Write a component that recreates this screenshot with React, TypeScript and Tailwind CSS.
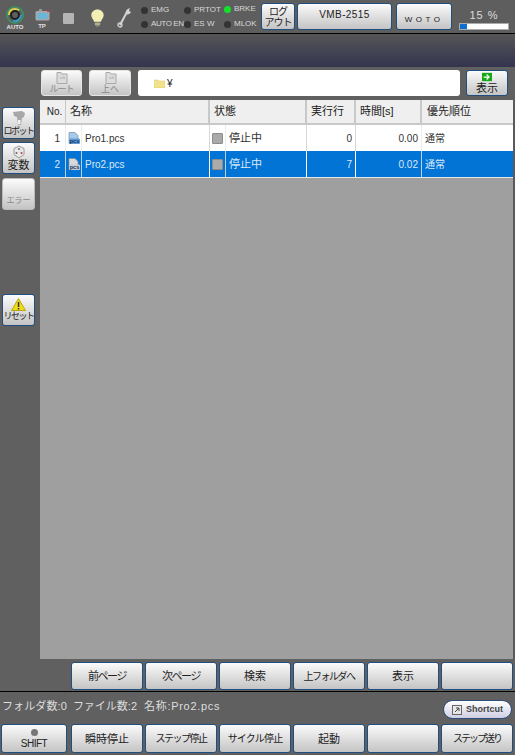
import type { ReactNode } from "react";
import { twMerge } from "tailwind-merge";

const FONT = "font-['Liberation_Sans','Noto_Sans_CJK_JP',sans-serif]";

function Btn({ children, className = "" }: { children?: ReactNode; className?: string }) {
  return (
    <div
      className={twMerge(
        "flex shrink-0 flex-col items-center justify-center whitespace-nowrap rounded-[3px] border border-[#1f4f7f] bg-gradient-to-b from-[#fbfbfb] to-[#c4c4c4] text-[11px] leading-[12px] text-[#222]",
        className,
      )}
    >
      {children}
    </div>
  );
}

function Lamp({ label, on, className = "" }: { label: string; on?: boolean; className?: string }) {
  return (
    <div className={`flex items-center gap-[3px] whitespace-nowrap text-[8px] leading-none text-[#d8d8d8] ${className}`}>
      <span className={`size-[7px] shrink-0 rounded-full ${on ? "bg-[#14e02a]" : "bg-[#333]"}`} />
      <span>{label}</span>
    </div>
  );
}

function PcsIcon({ selected }: { selected?: boolean }) {
  return (
    <svg width="12" height="13" viewBox="0 0 12 13">
      <path d="M1 0.500h6l3 3v8H1z" fill={selected ? "#d9d9d9" : "#a9c9ea"} stroke={selected ? "#8f8f8f" : "#5a7fa8"} strokeWidth="0.600" />
      <rect x="1" y="6.500" width="11" height="5.500" rx="1" fill={selected ? "#c4ccd6" : "#5f9ad6"} />
      <text x="6.500" y="11" textAnchor="middle" fontSize="5.500" fontWeight="bold" fill="#12335a" fontFamily="Liberation Sans">pcs</text>
    </svg>
  );
}

const COLS = "grid grid-cols-[26px_16px_128px_16px_81px_49px_66px_91px]";

function Row({ no, name, line, time, selected }: { no: string; name: string; line: string; time: string; selected?: boolean }) {
  const soft = selected ? "border-r border-[#b8cfe8]" : "border-r border-[#ececec]";
  const hard = selected ? "border-r border-white" : "border-r border-[#d8d8d8]";
  return (
    <div className={`${COLS} h-[26px] items-stretch text-[10px] ${selected ? "bg-[#0274d6] text-[#dbe9f6]" : "bg-white text-[#333]"}`}>
      <div className={`${soft} flex items-center justify-end pr-[5px]`}>{no}</div>
      <div className={`${soft} flex items-center justify-center`}><PcsIcon selected={selected} /></div>
      <div className={`${hard} flex items-center pl-[3px]`}>{name}</div>
      <div className={`${soft} flex items-center justify-center`}>
        <span className="size-[11px] rounded-[1px] border border-[#8c8c8c] bg-[#aaa]" />
      </div>
      <div className={`${hard} flex items-center pl-[3px] text-[11px]`}>停止中</div>
      <div className={`${hard} flex items-center justify-end pr-[3px]`}>{line}</div>
      <div className={`${soft} flex items-center justify-end pr-[3px]`}>{time}</div>
      <div className="flex items-center pl-[3px]">通常</div>
    </div>
  );
}

function Head({ children, className = "" }: { children: ReactNode; className?: string }) {
  return <div className={`flex items-center border-r-2 border-[#c8c8c8] pl-[4px] ${className}`}>{children}</div>;
}

function PageIcon() {
  return (
    <svg width="15" height="12" viewBox="0 0 15 12">
      <path d="M3 0.500h4l1 1.500h5v9.500H3z" fill="#dcdcdc" stroke="#a8a8a8" />
      <path d="M6 6h5l-1.500-1.500" stroke="#b0b0b0" fill="none" />
    </svg>
  );
}

export default function App() {
  return (
    <div className={`flex h-[755px] w-[515px] flex-col overflow-hidden bg-[#606060] ${FONT}`}>
      {/* status bar */}
      <div className="flex h-[34px] shrink-0 items-start border-b border-black bg-[#5e5e5e]">
        <div className="ml-[6px] mt-[6px] flex w-[18px] shrink-0 flex-col items-center">
          <svg width="18" height="18" viewBox="0 0 18 18" fill="none">
            <circle cx="9" cy="9" r="8" stroke="#3f8f62" strokeWidth="2" />
            <path d="M3 9a6 6 0 0 1 10-4.500" stroke="#e0d050" strokeWidth="2" />
            <circle cx="9" cy="9" r="4" stroke="#1e1e1e" strokeWidth="2" />
            <path d="M15 9a6 6 0 0 1-8 5.600" stroke="#3a96c8" strokeWidth="2" />
          </svg>
          <span className="text-[6px] font-bold leading-[7px] text-[#e8e8e8]">AUTO</span>
        </div>
        <div className="ml-[10px] mt-[9px] flex w-[16px] shrink-0 flex-col items-center">
          <svg width="15" height="12" viewBox="0 0 15 12">
            <rect x="0.500" y="2" width="14" height="9.500" rx="1.500" fill="#a8a8a8" />
            <rect x="2.500" y="4" width="10" height="6" fill="#68b6d8" />
            <rect x="4" y="0" width="3" height="2" fill="#999" />
            <rect x="12" y="1" width="2" height="2" fill="#c24040" />
          </svg>
          <span className="mt-[2px] text-[6px] font-bold leading-[6px] text-[#e0e0e0]">TP</span>
        </div>
        <span className="ml-[13px] mt-[13px] size-[11px] shrink-0 rounded-[1px] bg-[#b4b4b4]" />
        <svg className="ml-[16px] mt-[8px] shrink-0" width="15" height="20" viewBox="0 0 17 20">
          <path d="M8.500 0.500c4 0 7 2.800 7 6.400 0 3-2.400 4.600-3.200 7.400H4.700C3.900 11.500 1.500 9.900 1.500 6.900c0-3.600 3-6.400 7-6.400z" fill="#f3eeb4" />
          <rect x="5.500" y="15" width="6" height="3.500" rx="1" fill="#b4b088" />
          <rect x="7" y="18.500" width="3" height="1.500" fill="#888" />
        </svg>
        <svg className="ml-[12px] mt-[7px] shrink-0" width="14" height="21" viewBox="0 0 14 21" fill="none">
          <path d="M3 18L10 5" stroke="#d4d4d4" strokeWidth="2" />
          <path d="M9 7c-1-3 1-5 4-6l-1 3 2 1c-1 2-3 3-5 2z" fill="#d4d4d4" />
          <circle cx="3" cy="18" r="2" stroke="#d4d4d4" strokeWidth="1.300" />
        </svg>
        <div className="ml-[10px] mt-[6px] flex w-[43px] shrink-0 flex-col gap-[6px]">
          <Lamp label="EMG" />
          <Lamp label="AUTO EN" className="tracking-[-0.4px]" />
        </div>
        <div className="mt-[6px] flex w-[40px] shrink-0 flex-col gap-[6px]">
          <Lamp label="PRTOT" />
          <Lamp label="ES W" />
        </div>
        <div className="mt-[5px] flex w-[37px] shrink-0 flex-col gap-[7px]">
          <Lamp label="BRKE" on />
          <Lamp label="MLOK" />
        </div>
        <Btn className="mt-[3px] h-[27px] w-[34px] text-[10px] leading-[11px] tracking-[-1px]">
          <span>ログ</span>
          <span>アウト</span>
        </Btn>
        <Btn className="ml-[2px] mt-[3px] h-[27px] w-[95px] pb-[4px] text-[10px] tracking-[0.4px]">VMB-2515</Btn>
        <Btn className="ml-[4px] mt-[3px] h-[27px] w-[56px] justify-end pb-[4px] text-[8px] leading-[10px] tracking-[3.500px]">WOTO</Btn>
        <div className="ml-[7px] mt-[9px] flex w-[50px] shrink-0 flex-col items-center">
          <span className="text-[11px] leading-[12px] tracking-[1px] text-[#dcdcdc]">15 %</span>
          <div className="mt-[2px] h-[7px] w-[50px] border border-[#aaa] bg-white">
            <div className="h-full w-[15%] bg-[#0f6fd0]" />
          </div>
        </div>
      </div>

      {/* title band */}
      <div className="h-[33px] shrink-0 bg-gradient-to-b from-[#565656] to-[#34344f]" />

      {/* path bar */}
      <div className="flex h-[33px] shrink-0 items-start pl-[41px] pt-[3px]">
        <Btn className="h-[26px] w-[41px] border-[#e4e4e4] text-[9px] leading-[10px] tracking-[-1px] text-[#888]">
          <PageIcon />
          <span>ルート</span>
        </Btn>
        <Btn className="ml-[7px] h-[26px] w-[42px] border-[#e4e4e4] text-[9px] leading-[10px] text-[#888]">
          <PageIcon />
          <span>上へ</span>
        </Btn>
        <div className="ml-[7px] flex h-[26px] w-[322px] shrink-0 items-center rounded-[3px] bg-white pl-[16px] text-[10px] text-[#222]">
          <svg width="11" height="9" viewBox="0 0 11 9">
            <path d="M0 1h4l1 1h6v7H0z" fill="#f2e28c" stroke="#d6c468" strokeWidth="0.500" />
          </svg>
          <span className="ml-[2px]">¥</span>
        </div>
        <Btn className="ml-[6px] h-[26px] w-[42px] text-[11px] leading-[12px]">
          <svg width="10" height="10" viewBox="0 0 12 10">
            <rect width="12" height="10" fill="#16a816" />
            <path d="M2 5h6M5.500 2l3 3-3 3" stroke="#fff" strokeWidth="1.500" fill="none" />
          </svg>
          <span>表示</span>
        </Btn>
      </div>

      {/* main */}
      <div className="flex min-h-0 flex-1">
        <div className="flex w-[40px] shrink-0 flex-col pl-[2px] pt-[7px]">
          <Btn className="h-[32px] w-[33px] text-[9px] leading-[10px] tracking-[-1.5px]">
            <svg width="12" height="15" viewBox="0 0 12 15">
              <path d="M0 1l9-1 3 2-1 4-2 1-1 7H5L4 6 1 5z" fill="#a8a8a8" />
              <rect x="5" y="9" width="2.500" height="4" fill="#f0f0f0" />
            </svg>
            <span>ロボット</span>
          </Btn>
          <Btn className="mt-[3px] h-[32px] w-[33px] text-[11px] leading-[12px]">
            <svg width="14" height="14" viewBox="0 0 14 14">
              <path d="M7 1l5 2.500v6L7 13l-5-3.500v-6z" fill="#e8e8e8" stroke="#9a9a9a" />
              <circle cx="7" cy="4" r="1" fill="#666" />
              <circle cx="4.500" cy="8" r="1" fill="#666" />
              <circle cx="9.500" cy="8" r="1" fill="#b04040" />
            </svg>
            <span>変数</span>
          </Btn>
          <Btn className="mt-[4px] h-[32px] w-[33px] justify-end border-[#bbb] pb-[3px] text-[8px] leading-[10px] text-[#888]">エラー</Btn>
          <Btn className="mt-[84px] h-[32px] w-[33px] text-[9px] leading-[11px] tracking-[-1.5px]">
            <svg width="15" height="13" viewBox="0 0 15 13">
              <path d="M7.500 0.500L14.500 12.500H0.500z" fill="#eedb1c" stroke="#b8a810" strokeLinejoin="round" />
              <rect x="6.800" y="4" width="1.500" height="5" fill="#333" />
              <rect x="6.800" y="10" width="1.500" height="1.500" fill="#333" />
            </svg>
            <span>リセット</span>
          </Btn>
        </div>
        <div className="flex min-w-0 flex-1 flex-col border-r-2 border-r-[#5a5a5a] bg-[#9f9f9f]">
          <div className={`${COLS} h-[25px] shrink-0 border-b-2 border-[#c8c8c8] bg-[#efefef] text-[11px] text-[#222]`}>
            <Head className="justify-center border-r-[1px] pl-0 text-[10px]">No.</Head>
            <Head className="col-span-2">名称</Head>
            <Head className="col-span-2">状態</Head>
            <Head>実行行</Head>
            <Head>時間[s]</Head>
            <div className="flex items-center pl-[5px]">優先順位</div>
          </div>
          <Row no="1" name="Pro1.pcs" line="0" time="0.00" />
          <Row no="2" name="Pro2.pcs" line="7" time="0.02" selected />
          <div className="h-[1px] bg-[#e8e8e8]" />
        </div>
      </div>

      {/* page buttons */}
      <div className="flex h-[33px] shrink-0 items-start gap-[2px] border-b border-black pl-[71px] pt-[3px]">
        <Btn className="h-[28px] w-[72px] tracking-[-1.5px]">前ページ</Btn>
        <Btn className="h-[28px] w-[72px] tracking-[-1.5px]">次ページ</Btn>
        <Btn className="h-[28px] w-[72px]">検索</Btn>
        <Btn className="h-[28px] w-[72px] text-[10px] tracking-[-1.5px]">上フォルダへ</Btn>
        <Btn className="h-[28px] w-[72px]">表示</Btn>
        <Btn className="h-[28px] w-[72px]" />
      </div>

      {/* status line */}
      <div className="flex h-[32px] shrink-0 items-start pl-[2px] pt-[5px] text-[11px] text-[#dedede]">
        <span className="mt-[1px] tracking-[0.1px]">フォルダ数:0</span>
        <span className="ml-[6px] mt-[1px]">ファイル数:2</span>
        <span className="ml-[7px] mt-[1px] tracking-[0.7px]">名称:Pro2.pcs</span>
        <div className="ml-auto mr-[3px] mt-[3px] flex h-[19px] w-[69px] items-center justify-center gap-[4px] rounded-full border border-[#2d4d7c] bg-gradient-to-b from-[#ffffff] to-[#cfcfe4] text-[9px] font-bold text-[#444]">
          <svg width="10" height="10" viewBox="0 0 10 10">
            <rect x="0.500" y="0.500" width="9" height="9" fill="#e8e8e8" stroke="#666" />
            <path d="M3 7l4-4M4 3h3v3" stroke="#444" fill="none" />
          </svg>
          Shortcut
        </div>
      </div>

      {/* command buttons */}
      <div className="flex h-[31px] shrink-0 items-start pl-[1px]">
        <Btn className="h-[29px] w-[66px] justify-end pb-[2px] text-[10px] leading-[12px] tracking-[-0.5px]">
          <span className="mb-[2px] size-[7px] rounded-full bg-[#777]" />
          SHIFT
        </Btn>
        <div className="ml-[4px] flex gap-[2px]">
          <Btn className="h-[29px] w-[72px]">瞬時停止</Btn>
          <Btn className="h-[29px] w-[72px] text-[10px] tracking-[-1.5px]">ステップ停止</Btn>
          <Btn className="h-[29px] w-[72px] text-[10px] tracking-[-0.8px]">サイクル停止</Btn>
          <Btn className="h-[29px] w-[72px]">起動</Btn>
          <Btn className="h-[29px] w-[72px]" />
          <Btn className="h-[29px] w-[72px] text-[10px] tracking-[-2px]">ステップ送り</Btn>
        </div>
      </div>
    </div>
  );
}
